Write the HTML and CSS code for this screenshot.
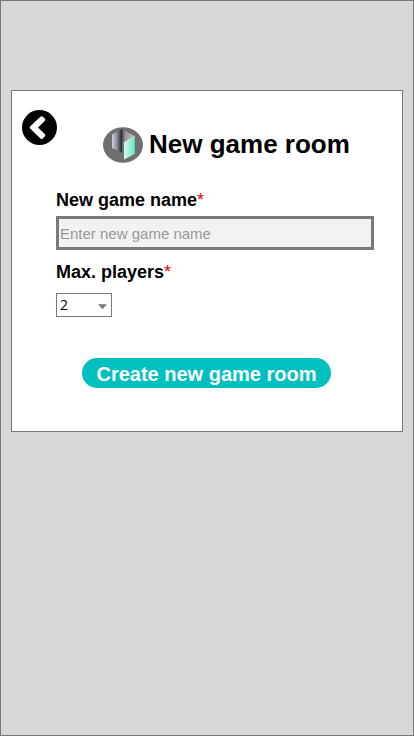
FILE: index.html
```html
<!DOCTYPE html>
<html lang="en">
<head>
<meta charset="utf-8">
<title>New game room</title>
<link rel="stylesheet" href="styles.css">
</head>
<body>
<main class="card">
  <header class="header">
    <svg class="back" viewBox="0 0 35 35" role="img" aria-label="Back">
      <circle cx="17.5" cy="17.5" r="17.5"/>
      <path d="M18.4 6.7Q19.6 5.6 20.8 6.7L22.8 8.5Q23.9 9.7 22.8 10.9L16 17.5 22.8 24.1Q23.9 25.3 22.8 26.5L20.8 28.4Q19.6 29.5 18.4 28.4L8.1 18.6Q7.1 17.5 8.1 16.4Z" fill="#fff"/>
    </svg>
    <svg class="logo" viewBox="0 0 40 36" aria-hidden="true">
      <defs>
        <linearGradient id="left"><stop offset="0" stop-color="#ced1de"/><stop offset=".5" stop-color="#8a8c97"/><stop offset="1" stop-color="#222226"/></linearGradient>
        <linearGradient id="back"><stop offset="0" stop-color="#3b3b3f"/><stop offset=".3" stop-color="#98989b"/><stop offset="1" stop-color="#c4c4c6"/></linearGradient>
        <linearGradient id="mint"><stop offset="0" stop-color="#d8f7ef"/><stop offset="1" stop-color="#62e8c4"/></linearGradient>
      </defs>
      <ellipse cx="20" cy="18" rx="20" ry="17.8" fill="#6f6f6f"/>
      <path d="M18.5 2 31.8 9 21.5 15.5 18.5 14Z" fill="url(#back)"/>
      <path d="M9 7.5 19 2V25.5L9 21Z" fill="url(#left)"/>
      <path d="M21 15.7 31.8 9.5V27L21 32.5Z" fill="url(#mint)"/>
      <path d="M21 15.7 31.8 9.5" stroke="#eee" stroke-width=".9"/>
    </svg>
    <h1 class="title">New game room</h1>
  </header>
  <form class="form">
    <label class="label" for="name">New game name<span class="required">*</span></label>
    <input class="input" id="name" type="text" placeholder="Enter new game name">
    <div class="label">Max. players<span class="required">*</span></div>
    <div class="select"><span>2</span>
      <svg class="arrow" viewBox="0 0 10 5"><path d="M0 0H10L5.5 5H4.5Z"/></svg>
    </div>
  </form>
  <button class="submit" type="button">Create new game room</button>
</main>
</body>
</html>
```

FILE: styles.css
```css
* {
  box-sizing: border-box;
}

body {
  margin: 0;
  height: 736px;
  padding: 89px 10px 0;
  border: 1px solid #797979;
  background: #d7d7d7;
  color: #000;
  font-family: "Liberation Sans", Arial, sans-serif;
  overflow: hidden;
}

.card {
  width: 392px;
  height: 342px;
  border: 1px solid #797979;
  background: #fff;
  display: flex;
  flex-direction: column;
}

.header {
  display: flex;
  align-items: flex-start;
  padding: 19px 0 0 10px;
  height: 97px;
}

.back {
  width: 35px;
  height: 35px;
}

.logo {
  width: 40px;
  height: 36px;
  margin: 17px 6px 0 46px;
}

.title {
  margin: 19px 0 0;
  font-size: 26px;
  line-height: 30px;
  white-space: nowrap;
}

.form {
  padding-left: 44px;
  display: flex;
  flex-direction: column;
  align-items: flex-start;
}

.label {
  font-size: 18px;
  font-weight: bold;
  line-height: 24px;
}

.required {
  color: #d9001b;
  font-weight: normal;
}

.input {
  width: 318px;
  height: 34px;
  margin: 4px 0 10px;
  padding: 2px 1px;
  border: 3px solid #797979;
  border-radius: 0;
  background: #f2f2f2;
  font: 15px "Liberation Sans", Arial, sans-serif;
}

.input::placeholder {
  color: #999;
}

.select {
  width: 56px;
  height: 24px;
  margin-top: 9px;
  padding: 0 4px 0 3px;
  border: 1px solid #797979;
  display: flex;
  align-items: center;
  justify-content: space-between;
  font: 14px/22px "Open Sans", sans-serif;
}

.arrow {
  width: 9px;
  height: 5px;
  margin-top: 2px;
  fill: #797979;
}

.submit {
  width: 249px;
  height: 30px;
  margin: 41px 0 0 70px;
  padding: 2px 0 0;
  border: 0;
  border-radius: 15px;
  background: #00bfbf;
  color: #fff;
  font: bold 20px "Liberation Sans", Arial, sans-serif;
}
```
